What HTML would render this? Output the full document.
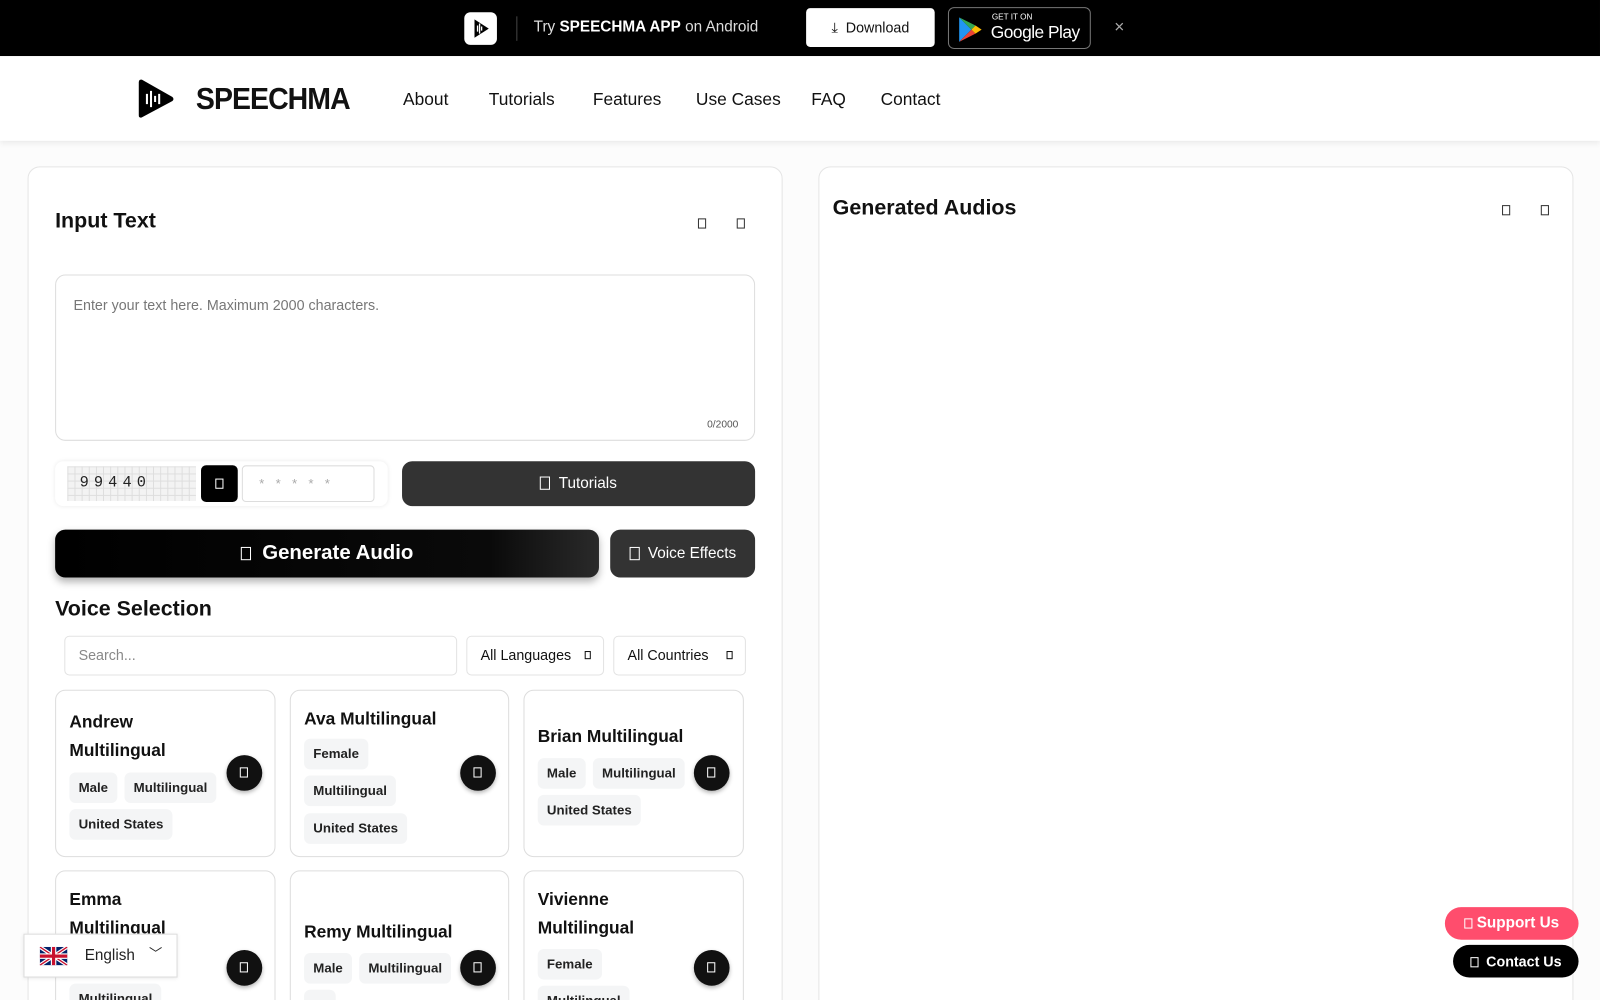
<!DOCTYPE html>
<html><head><meta charset="utf-8">
<style>
*{box-sizing:border-box;margin:0;padding:0}
html,body{width:1600px;height:1000px;overflow:hidden;background:#fff;font-family:"Liberation Sans",sans-serif;color:#111}
#w{position:absolute;left:0;top:0;width:1568px;height:980px;overflow:hidden;transform:scale(1.0204);transform-origin:0 0;background:#fcfcfc}
.a{position:absolute}
.top{left:0;top:0;width:1568px;height:55px;background:#000}
.hdr{left:0;top:55px;width:1568px;height:83px;background:#fff;box-shadow:0 2px 6px rgba(0,0,0,.08)}
.panel{background:#fff;border:1px solid #e5e5e5;border-radius:12px}
.sq{display:inline-block;width:8px;height:10px;border:1px solid currentColor}
.tag{position:absolute;background:#f4f5f6;border-radius:6px;font-size:13px;font-weight:bold;color:#222;padding:0 9px;height:30px;line-height:30px;white-space:nowrap}
.card{position:absolute;background:#fff;border:1px solid #ddd;border-radius:10px}
.card h4{position:absolute;left:13px;font-size:17px;font-weight:bold;line-height:28px;color:#111}
.play{position:absolute;width:35px;height:35px;border-radius:50%;background:#111;color:#fff;box-shadow:0 2px 4px rgba(0,0,0,.3)}
.play .sq{position:absolute;left:13px;top:12px;width:8px;height:10px}
.nav{font-size:17px;color:#111;top:88px}
</style></head><body><div id="w">
<div class="a top"></div>
<div class="a" style="left:455px;top:12px;width:32px;height:32px;background:#fff;border-radius:6px"><svg width="32" height="32" viewBox="0 0 32 32"><path d="M10 7 L24 16 L10 25 Z" fill="#000"/><path d="M13 13v6M15 11v10M17 14v4" stroke="#fff" stroke-width="1.3"/></svg></div>
<div class="a" style="left:506px;top:16px;width:1px;height:24px;background:#444"></div>
<div class="a" style="left:523px;top:18px;color:#ddd;font-size:15px;white-space:nowrap">Try <b style="color:#fff">SPEECHMA APP</b> on Android</div>
<div class="a" style="left:790px;top:8px;width:126px;height:38px;background:#fff;border-radius:4px;font-size:14px;line-height:38px;text-align:center;color:#111">⤓&nbsp; Download</div>
<div class="a" style="left:929px;top:7px;width:140px;height:41px;background:#000;border:1px solid #777;border-radius:6px;white-space:nowrap">
<svg class="a" style="left:8px;top:8px" width="26" height="26" viewBox="0 0 26 26"><path d="M2 1 L14 13 L2 25Z" fill="#2196f3"/><path d="M2 1 L18 9 L14 13Z" fill="#34a853"/><path d="M2 25 L18 17 L14 13Z" fill="#ea4335"/><path d="M18 9 L24 13 L18 17 L14 13Z" fill="#fbbc04"/></svg>
<div class="a" style="left:42px;top:4px;color:#fff;font-size:8px">GET IT ON</div>
<div class="a" style="left:41px;top:14px;color:#fff;font-size:17px;letter-spacing:-.5px">Google Play</div></div>
<div class="a" style="left:1092px;top:17px;color:#aaa;font-size:17px">×</div>
<div class="a hdr"></div>
<svg class="a" style="left:134px;top:76px" width="38" height="42" viewBox="0 0 38 42"><path d="M4 2 Q2 2 2 5 V37 Q2 40 5 39 L35 23 Q37 21 35 19 L5 2Z" fill="#000"/><path d="M10 16v10M14 13v16M18 18v6M22 16v10" stroke="#fff" stroke-width="2"/></svg>
<div class="a" style="left:192px;top:81px;font-size:30px;font-weight:bold;letter-spacing:-1px;transform:scaleX(.93);transform-origin:0 0">SPEECHMA</div>
<div class="a nav" style="left:395px">About</div>
<div class="a nav" style="left:479px">Tutorials</div>
<div class="a nav" style="left:581px">Features</div>
<div class="a nav" style="left:682px">Use Cases</div>
<div class="a nav" style="left:795px">FAQ</div>
<div class="a nav" style="left:863px">Contact</div>

<div class="a panel" style="left:27px;top:163px;width:740px;height:840px"></div>
<div class="a panel" style="left:802px;top:163px;width:740px;height:840px"></div>
<div class="a" style="left:54px;top:205px;font-size:21px;font-weight:bold">Input Text</div>
<div class="a" style="left:684px;top:211px;color:#333"><span class="sq"></span></div>
<div class="a" style="left:722px;top:211px;color:#333"><span class="sq"></span></div>
<div class="a" style="left:816px;top:192px;font-size:21px;font-weight:bold">Generated Audios</div>
<div class="a" style="left:1472px;top:198px;color:#333"><span class="sq"></span></div>
<div class="a" style="left:1510px;top:198px;color:#333"><span class="sq"></span></div>
<div class="a" style="left:54px;top:269px;width:686px;height:163px;border:1px solid #ddd;border-radius:10px"></div>
<div class="a" style="left:72px;top:291px;color:#777;font-size:14px">Enter your text here. Maximum 2000 characters.</div>
<div class="a" style="left:693px;top:411px;color:#555;font-size:10px">0/2000</div>

<div class="a" style="left:54px;top:452px;width:326px;height:44px;border-radius:8px;box-shadow:0 0 4px rgba(0,0,0,.08);background:#fff"></div>
<div class="a" style="left:66px;top:457px;width:126px;height:34px;background-color:#f3f3f3;background-image:linear-gradient(#ddd 1px,transparent 1px),linear-gradient(90deg,#ddd 1px,transparent 1px);background-size:7px 7px;font-family:'Liberation Mono',monospace;font-size:15px;line-height:34px;padding-left:12px;letter-spacing:5px;color:#222">99440</div>
<div class="a" style="left:197px;top:456px;width:36px;height:36px;background:#000;border-radius:5px;color:#fff"><span class="sq" style="position:absolute;left:14px;top:13px"></span></div>
<div class="a" style="left:237px;top:456px;width:130px;height:36px;border:1px solid #ddd;border-radius:4px;color:#aaa;font-size:13px;line-height:34px;padding-left:16px;letter-spacing:11px">*****</div>
<div class="a" style="left:394px;top:452px;width:346px;height:44px;background:#333;border-radius:10px;color:#fff;font-size:15px;line-height:44px;text-align:center"><span class="sq" style="width:10px;height:13px;vertical-align:-2px"></span>&nbsp; Tutorials</div>
<div class="a" style="left:54px;top:519px;width:533px;height:47px;background:linear-gradient(90deg,#000,#0a0a0a 80%,#2a2a2a);border-radius:10px;color:#fff;font-size:20px;font-weight:bold;line-height:47px;text-align:center;box-shadow:0 4px 8px rgba(0,0,0,.3)"><span class="sq" style="width:10px;height:13px;vertical-align:-1px"></span>&nbsp; Generate Audio</div>
<div class="a" style="left:598px;top:519px;width:142px;height:47px;background:#333;border-radius:10px;color:#fff;font-size:15px;line-height:47px;text-align:center"><span class="sq" style="width:10px;height:13px;vertical-align:-2px"></span>&nbsp; Voice Effects</div>
<div class="a" style="left:54px;top:585px;font-size:21px;font-weight:bold">Voice Selection</div>
<div class="a" style="left:63px;top:623px;width:385px;height:39px;border:1px solid #e3e3e3;border-radius:5px;color:#888;font-size:14px;line-height:37px;padding-left:13px;background:#fff">Search...</div>
<div class="a" style="left:457px;top:623px;width:135px;height:39px;border:1px solid #e3e3e3;border-radius:5px;font-size:14px;line-height:37px;padding-left:13px;background:#fff">All Languages <span class="sq" style="position:absolute;right:12px;top:14px;width:6px;height:8px"></span></div>
<div class="a" style="left:601px;top:623px;width:130px;height:39px;border:1px solid #e3e3e3;border-radius:5px;font-size:14px;line-height:37px;padding-left:13px;background:#fff">All Countries <span class="sq" style="position:absolute;right:12px;top:14px;width:6px;height:8px"></span></div>

<div class="card" style="left:54px;top:676px;width:216px;height:164px"><h4 style="top:17px">Andrew<br>Multilingual</h4>
<div class="tag" style="left:13px;top:80px">Male</div><div class="tag" style="left:67px;top:80px">Multilingual</div><div class="tag" style="left:13px;top:116px">United States</div>
<div class="play" style="left:167px;top:63px"><span class="sq"></span></div></div>
<div class="card" style="left:284px;top:676px;width:215px;height:164px"><h4 style="top:14px">Ava Multilingual</h4>
<div class="tag" style="left:13px;top:47px">Female</div><div class="tag" style="left:13px;top:83px">Multilingual</div><div class="tag" style="left:13px;top:120px">United States</div>
<div class="play" style="left:166px;top:63px"><span class="sq"></span></div></div>
<div class="card" style="left:513px;top:676px;width:216px;height:164px"><h4 style="top:31px">Brian Multilingual</h4>
<div class="tag" style="left:13px;top:66px">Male</div><div class="tag" style="left:67px;top:66px">Multilingual</div><div class="tag" style="left:13px;top:102px">United States</div>
<div class="play" style="left:166px;top:63px"><span class="sq"></span></div></div>
<div class="card" style="left:54px;top:853px;width:216px;height:164px"><h4 style="top:14px">Emma<br>Multilingual</h4>
<div class="tag" style="left:13px;top:110px">Multilingual</div>
<div class="play" style="left:167px;top:77px"><span class="sq"></span></div></div>
<div class="card" style="left:284px;top:853px;width:215px;height:164px"><h4 style="top:46px">Remy Multilingual</h4>
<div class="tag" style="left:13px;top:80px">Male</div><div class="tag" style="left:67px;top:80px">Multilingual</div><div class="tag" style="left:13px;top:116px">Fr</div>
<div class="play" style="left:166px;top:77px"><span class="sq"></span></div></div>
<div class="card" style="left:513px;top:853px;width:216px;height:164px"><h4 style="top:14px">Vivienne<br>Multilingual</h4>
<div class="tag" style="left:13px;top:76px">Female</div><div class="tag" style="left:13px;top:112px">Multilingual</div>
<div class="play" style="left:166px;top:77px"><span class="sq"></span></div></div>

<div class="a" style="left:23px;top:915px;width:151px;height:43px;background:#fff;border:1px solid #ddd;box-shadow:0 1px 4px rgba(0,0,0,.1);font-size:15px;line-height:41px;padding-left:59px;color:#222">English <span style="position:absolute;left:122px;top:-2px;font-size:13px">﹀</span>
<svg class="a" style="left:15px;top:12px" width="27" height="18" viewBox="0 0 60 40"><rect width="60" height="40" fill="#012169"/><path d="M0 0L60 40M60 0L0 40" stroke="#fff" stroke-width="8"/><path d="M0 0L60 40M60 0L0 40" stroke="#c8102e" stroke-width="3"/><path d="M30 0V40M0 20H60" stroke="#fff" stroke-width="12"/><path d="M30 0V40M0 20H60" stroke="#c8102e" stroke-width="7"/></svg></div>
<div class="a" style="left:1416px;top:889px;width:131px;height:32px;background:#ff4d6d;border-radius:16px;color:#fff;font-size:15px;font-weight:bold;line-height:32px;text-align:center"><span class="sq" style="vertical-align:-1px"></span> Support Us</div>
<div class="a" style="left:1424px;top:926px;width:123px;height:32px;background:#000;border-radius:16px;color:#fff;font-size:14px;font-weight:bold;line-height:32px;text-align:center"><span class="sq" style="vertical-align:-1px"></span>&nbsp; Contact Us</div>
</div></body></html>
